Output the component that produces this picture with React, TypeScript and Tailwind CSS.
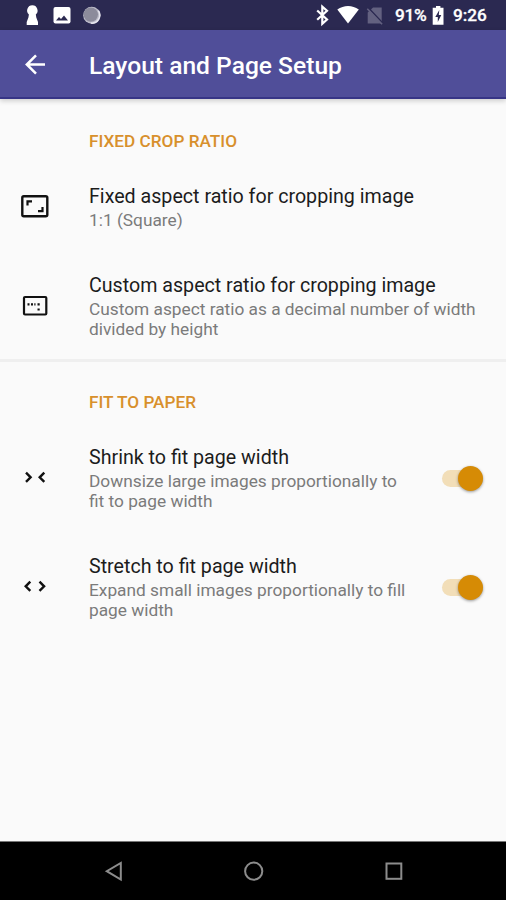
import type { ReactNode } from "react";

function StatusBar() {
  return (
    <div className="flex h-[30px] shrink-0 items-center bg-[#2b2951] text-white">
      <svg width="110" height="30" viewBox="0 0 110 30">
        <path d="M32.3 5.3a5.2 5.2 0 0 1 3.5 9.100l.5 3.100 1.700 4.400v3H26.700v-3l1.700-4.400.5-3.100a5.200 5.200 0 0 1 3.400-9.100z" fill="#fff" />
        <rect x="53.500" y="7" width="17" height="16.500" rx="2" fill="#fff" />
        <path d="M56 20.500l3-3.500 2 2 3-3.500 4 5z" fill="#2b2951" />
        <circle cx="91.700" cy="15.200" r="8.500" fill="#bdbcc9" />
        <circle cx="90.800" cy="14.600" r="7.200" fill="#8c8b9b" />
        <path d="M98.300 10.500a8 8 0 0 1-7.500 12.600" fill="none" stroke="#e6e5ee" strokeWidth="1.500" />
      </svg>
      <div className="flex-1" />
      <svg width="86" height="30" viewBox="314 0 86 30">
        <path d="M318.200 10.500l9.800 9-4.700 4.200V6.600l4.700 4.200-9.800 8.900" fill="none" stroke="#fff" strokeWidth="2.200" />
        <path d="M338.300 9.500c6.500-4.700 15-4.700 21.500 0L349 23.500z" fill="#fff" />
        <path d="M374 7.500h8.700v16h-14V12.500z" fill="#636180" />
        <path d="M369.500 8l15 16" stroke="#2b2951" strokeWidth="1.800" />
        <path d="M368.300 8.800l14.800 15.500" stroke="#636180" strokeWidth="1.600" />
      </svg>
      <span className="w-[33px] whitespace-nowrap text-[17.300px] font-medium tracking-[-0.300px] [-webkit-text-stroke:0.300px_white] -ml-[4px] pt-[2px]">91%</span>
      <svg className="ml-[4px]" width="12" height="30" viewBox="432 0 12 30">
        <path d="M436 6h4.400v1.800h3.100v17h-10.800v-17h3.300z" fill="#fff" />
        <path d="M439.300 10l-4 7h2.500v5l3.500-7h-2.500z" fill="#2b2951" />
      </svg>
      <span className="ml-[9px] w-[53px] whitespace-nowrap pt-[2px] text-[17.200px] font-medium [-webkit-text-stroke:0.300px_white]">9:26</span>
    </div>
  );
}

function AppBar() {
  return (
    <header className="z-10 flex h-[69px] shrink-0 items-center border-b-2 border-[#373586] bg-[#504e99] shadow-[0_2px_5px_rgba(0,0,0,0.18)]">
      <svg className="mt-[2px] ml-[20px]" width="30" height="30" viewBox="20 50 30 30" fill="none" stroke="#fff" strokeWidth="2.500">
        <path d="M45 64.500H27M36 55.300l-9.200 9.200 9.200 9.200" />
      </svg>
      <h1 className="ml-[39px] mt-[6px] whitespace-nowrap text-[24.600px] font-medium text-white">Layout and Page Setup</h1>
    </header>
  );
}

function Category({ children, className }: { children: ReactNode; className: string }) {
  return (
    <h2 className={`pl-[89px] text-[17.200px] leading-[20px] font-medium text-[#d8902c] ${className}`}>{children}</h2>
  );
}

interface PreferenceProps {
  icon: ReactNode;
  title: string;
  lines: string[];
  checked?: boolean;
  className?: string;
}

function Preference({ icon, title, lines, checked, className = "pb-[22px]" }: PreferenceProps) {
  return (
    <div className={`flex items-center pt-[21px] ${className}`}>
      <svg className="shrink-0" width="70" height="40" viewBox="0 0 70 40" fill="none" stroke="#111">
        {icon}
      </svg>
      <div className="ml-[19px] flex-1 whitespace-nowrap">
        <div className="text-[19.650px] leading-[25px] text-[#1c1c1c]">{title}</div>
        <div className="mt-px text-[17.300px] leading-[20px] text-[#7b7b7b]">
          {lines.map((line) => (
            <div key={line}>{line}</div>
          ))}
        </div>
      </div>
      {checked && (
        <div className="mr-[23px] flex h-[17px] w-[41px] items-center justify-end rounded-full bg-[#f2deb8]">
          <div className="h-[25px] w-[25px] shrink-0 rounded-full bg-[#d68b05] shadow-[0_1px_3px_rgba(0,0,0,0.4)]" />
        </div>
      )}
    </div>
  );
}

const fixedRatioIcon = (
  <>
    <rect x="22.300" y="9.300" width="25" height="20" rx="1.500" strokeWidth="2.400" />
    <path d="M27.500 18.500v-4.200h4.500M42.500 20v4.200H38" strokeWidth="2.200" />
  </>
);

const customRatioIcon = (
  <>
    <rect x="24" y="11" width="22.300" height="17.500" rx="1" strokeWidth="2.200" />
    <path d="M27.500 18.300h2M31 18.300h2M34.300 18.300h1.200M37.500 18.300h2.200M37.500 23.500h2.200" strokeWidth="2.200" />
  </>
);

const shrinkIcon = <path d="M26 14.700l4.600 4.600-4.600 4.600M44.300 14.700l-4.600 4.600 4.600 4.600" strokeWidth="2.400" />;
const stretchIcon = <path d="M30.300 14.700l-4.600 4.600 4.600 4.600M39.500 14.700l4.600 4.600-4.600 4.600" strokeWidth="2.400" />;

export default function App() {
  return (
    <div className="flex h-[900px] w-[506px] flex-col overflow-hidden bg-[#fafafa] font-[Roboto,sans-serif]">
      <StatusBar />
      <AppBar />
      <main className="flex-1">
        <section className="border-b-3 border-[#efefef]">
          <Category className="pt-[32px] pb-[12px]">FIXED CROP RATIO</Category>
          <Preference icon={fixedRatioIcon} title="Fixed aspect ratio for cropping image" lines={["1:1 (Square)"]} />
          <Preference
            icon={customRatioIcon}
            title="Custom aspect ratio for cropping image"
            lines={["Custom aspect ratio as a decimal number of width", "divided by height"]}
            className="pb-[20px]"
          />
        </section>
        <section>
          <Category className="pt-[30px] pb-[12px]">FIT TO PAPER</Category>
          <Preference
            icon={shrinkIcon}
            title="Shrink to fit page width"
            lines={["Downsize large images proportionally to", "fit to page width"]}
            checked
          />
          <Preference
            icon={stretchIcon}
            title="Stretch to fit page width"
            lines={["Expand small images proportionally to fill", "page width"]}
            checked
          />
        </section>
      </main>
      <nav className="h-[59px] shrink-0 border-t border-[#777] bg-black">
        <svg width="506" height="58" viewBox="0 842 506 58" fill="none" stroke="#8c8c8c" strokeWidth="2">
          <path d="M120.800 863v16.500l-14-8.300z" />
          <circle cx="253.700" cy="871.200" r="8.600" />
          <rect x="386.500" y="863.500" width="14.800" height="15.300" />
        </svg>
      </nav>
    </div>
  );
}
